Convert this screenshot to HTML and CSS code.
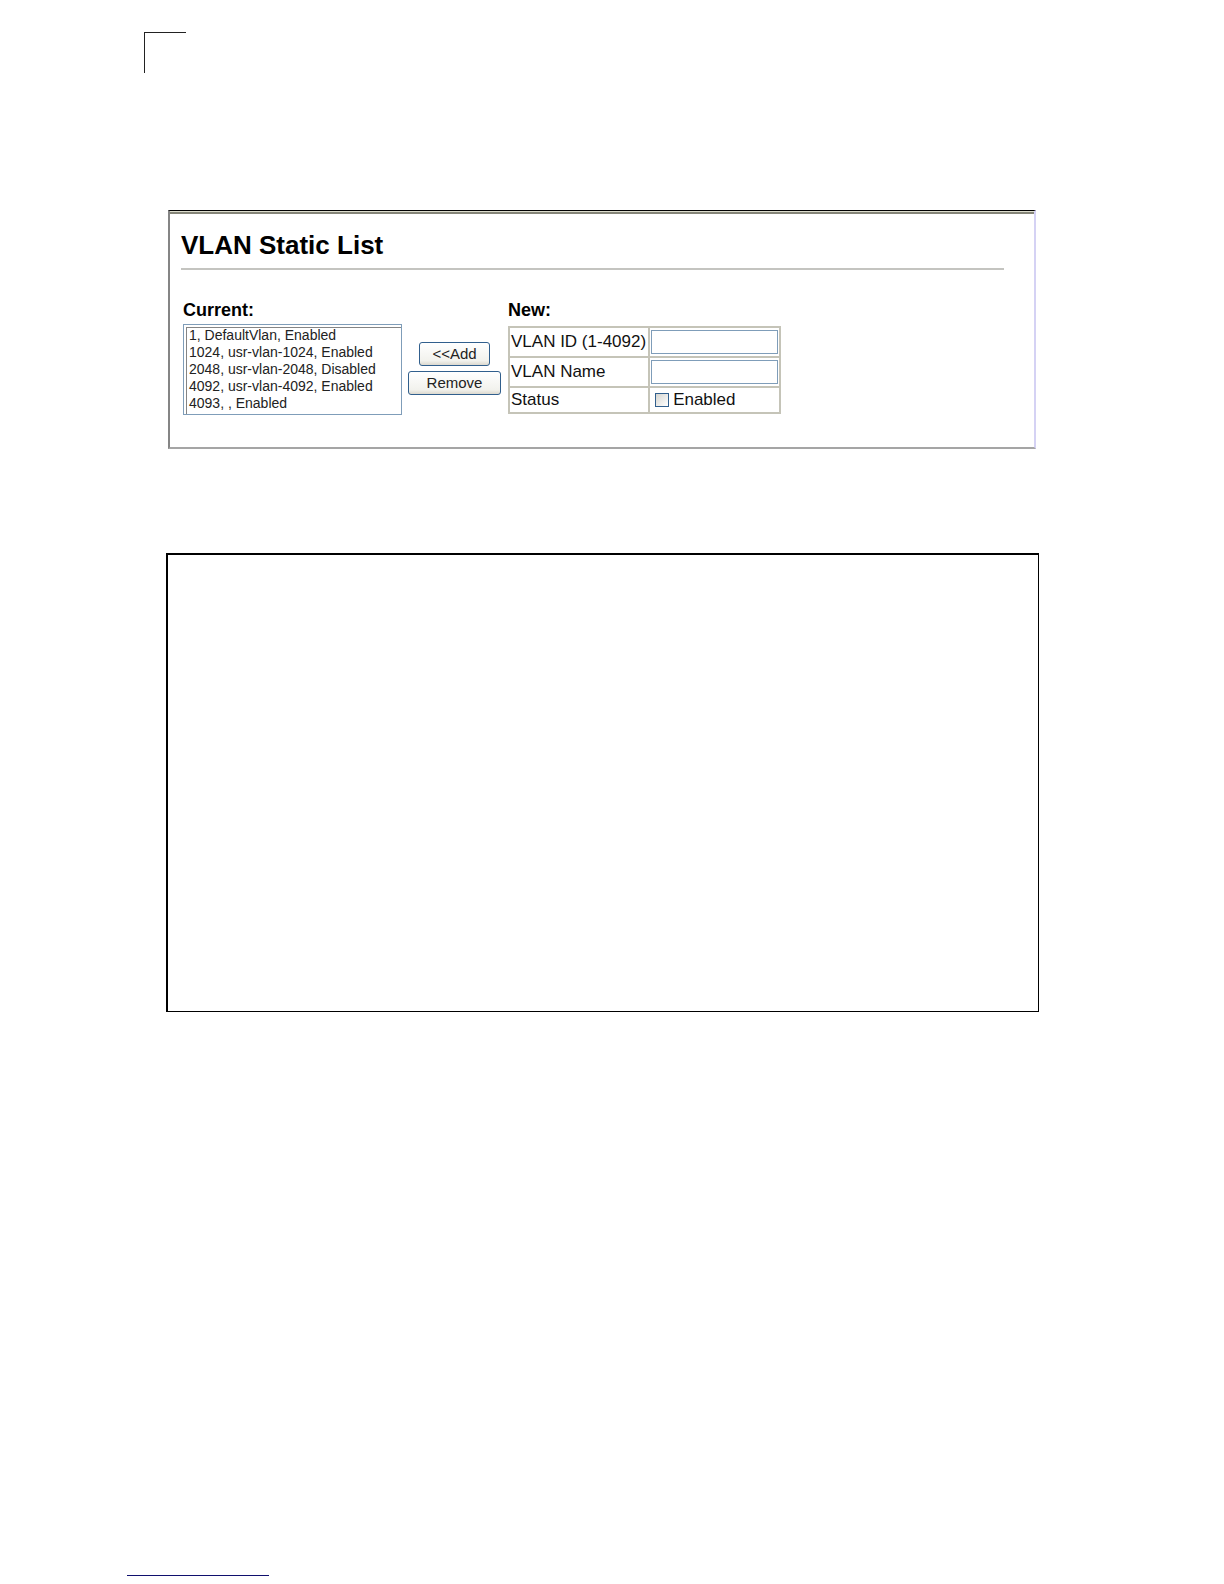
FILE: index.html
```html
<!DOCTYPE html>
<html lang="en">
<head>
<meta charset="utf-8">
<title>VLAN Static List</title>
<link rel="stylesheet" href="styles.css">
</head>
<body>
<div class="page">
  <header class="crop-mark"></header>
  <main class="content">
    <form class="panel">
      <h1 class="title">VLAN Static List</h1>
      <div class="editor">
        <div class="current">
          <label class="heading" for="vlans">Current:</label>
          <select class="vlans" id="vlans" size="5">
            <option>1, DefaultVlan, Enabled</option>
            <option>1024, usr-vlan-1024, Enabled</option>
            <option>2048, usr-vlan-2048, Disabled</option>
            <option>4092, usr-vlan-4092, Enabled</option>
            <option>4093, , Enabled</option>
          </select>
        </div>
        <div class="actions">
          <button class="button add" type="button">&lt;&lt;Add</button>
          <button class="button" type="button">Remove</button>
        </div>
        <div class="new">
          <h2 class="heading">New:</h2>
          <table class="fields">
            <tr>
              <th scope="row"><label for="vlan-id">VLAN ID (1-4092)</label></th>
              <td><input class="text" id="vlan-id" type="text"></td>
            </tr>
            <tr>
              <th scope="row"><label for="vlan-name">VLAN Name</label></th>
              <td><input class="text" id="vlan-name" type="text"></td>
            </tr>
            <tr class="status">
              <th scope="row">Status</th>
              <td><label class="check"><input class="box" type="checkbox">Enabled</label></td>
            </tr>
          </table>
        </div>
      </div>
    </form>
    <section class="frame"></section>
  </main>
  <footer class="foot-rule"></footer>
</div>
</body>
</html>
```
FILE: styles.css
```css
* {
  box-sizing: border-box;
}

body {
  margin: 0;
  background: #fff;
  color: #111;
  font-family: "Liberation Sans", Arial, sans-serif;
  font-size: 17px;
}

.page {
  display: flex;
  flex-direction: column;
  min-height: 100vh;
  padding: 32px 185px 8px 127px;
}

.crop-mark {
  width: 42px;
  height: 41px;
  margin-left: 17px;
  border: solid #222;
  border-width: 1px 0 0 1px;
}

.content {
  flex: 1;
  margin: 137px 0 40px 39px;
}

.panel {
  margin: 0 3px 0 2px;
  padding: 17px 30px 32px 11px;
  border: 2px solid #858585;
  border-top: 1px solid #000;
  border-right-color: #d5d2f4;
  border-bottom-color: #a5a5a5;
  box-shadow: inset 0 1px #dcdccc, inset 0 3px #858578;
}

.title {
  margin: 0;
  padding: 3px 0 9px;
  border-bottom: 2px solid #c4c4c0;
  color: #000;
  font-size: 26px;
  line-height: 28px;
}

.editor {
  display: flex;
  align-items: flex-start;
  padding: 30px 0 0 2px;
}

.heading {
  display: block;
  margin: 0;
  color: #000;
  font-size: 18px;
  font-weight: bold;
  line-height: 20px;
}

.vlans {
  display: block;
  width: 219px;
  height: 91px;
  margin-top: 4px;
  padding: 1px;
  overflow: hidden;
  border: 1px solid #7f9db9;
  border-radius: 0;
  background: #fff;
  box-shadow: inset 2px 2px #fff, inset 3px 3px #858585;
  color: #222;
  font-family: inherit;
  font-size: 14px;
}

.vlans option {
  min-height: 17px;
  padding: 0 4px;
  line-height: 17px;
}

.vlans option:first-child {
  margin-top: 1px;
}

.actions {
  display: flex;
  flex-direction: column;
  align-items: center;
  gap: 5px;
  padding: 42px 7px 0 6px;
}

.button {
  width: 93px;
  height: 24px;
  padding: 0 0 2px;
  border: 1px solid #315f8d;
  border-radius: 3px;
  background: linear-gradient(#fff, #f2f2ed 80%, #dcd9cf);
  color: #222;
  font-family: inherit;
  font-size: 15px;
}

.add {
  width: 71px;
}

.new .heading {
  margin-bottom: 6px;
}

.fields {
  border: 2px solid #c5c4b8;
  border-collapse: collapse;
}

.fields th,
.fields td {
  height: 30px;
  padding: 0 1px;
  border: 2px solid #c5c4b8;
  font-weight: normal;
  text-align: left;
}

.fields th {
  padding-right: 2px;
}

.fields .status th,
.fields .status td {
  height: 26px;
}

.text {
  display: block;
  width: 127px;
  height: 24px;
  border: 1px solid #7f9db9;
  background: #fff;
  font: inherit;
}

.check {
  display: flex;
  align-items: center;
  gap: 4px;
  padding-left: 4px;
}

.box {
  appearance: none;
  width: 14px;
  height: 14px;
  margin: 0;
  border: 1px solid #315f8d;
  background: linear-gradient(135deg, #d5d5d0, #fff);
}

.frame {
  min-height: 459px;
  margin-top: 104px;
  border: solid #000;
  border-width: 2px 1px 1px 2px;
}

.foot-rule {
  width: 142px;
  height: 1px;
  background: #10106e;
}
```
